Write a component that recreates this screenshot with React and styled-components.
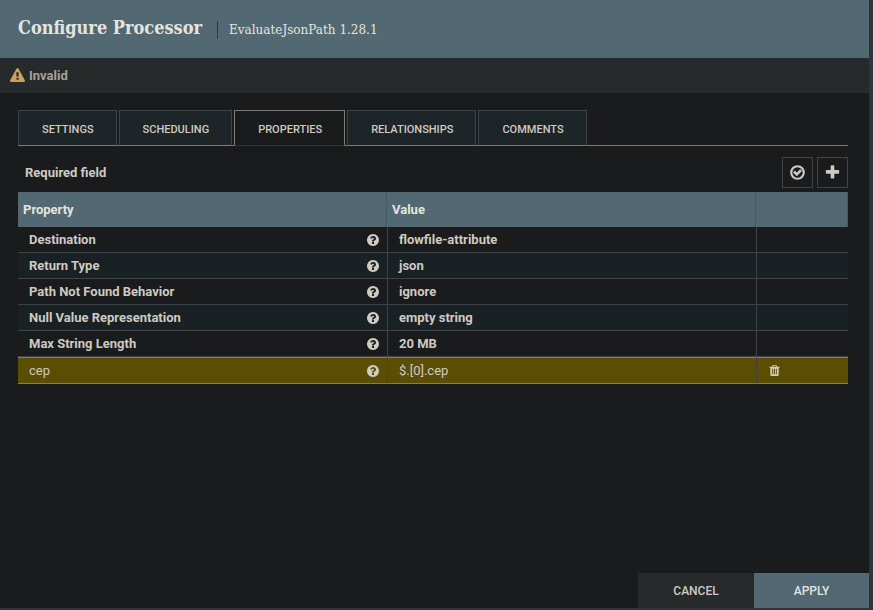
import React, { useState } from "react";
import styled, { createGlobalStyle } from "styled-components";

const GlobalStyle = createGlobalStyle`
  * { box-sizing: border-box; }
  body {
    margin: 0;
    background: #29383d;
    color: #cfcac2;
    font: 13px/18px Roboto, "Liberation Sans", sans-serif;
  }
  button { font: inherit; color: inherit; cursor: pointer; }
`;

const Page = styled.div`
  display: flex;
  min-height: 100vh;
  padding: 0 4px 2px 0;
`;

const Dialog = styled.main`
  display: flex;
  flex: 1;
  flex-direction: column;
  min-width: 0;
  background: #1a1b1d;
`;

const Header = styled.header`
  display: flex;
  align-items: center;
  height: 58px;
  padding: 0 18px 2px;
  background: #526872;
  color: #e6e3df;
`;

const Title = styled.h1`
  margin: 0;
  padding-right: 15px;
  font-family: "Roboto Slab", "DejaVu Serif Condensed", "DejaVu Serif", serif;
  font-size: 18px;
  line-height: 24px;
  font-weight: 700;
`;

const Subtitle = styled.div`
  margin-top: 4px;
  padding-left: 11px;
  border-left: 1px solid #2c3a40;
  font-family: "Roboto Slab", "DejaVu Serif", serif;
  font-size: 12px;
  line-height: 18px;
`;

const StatusBar = styled.div`
  display: flex;
  align-items: center;
  gap: 4px;
  height: 35px;
  padding: 0 10px;
  background: #262a2b;
  color: #a8a197;
  font-weight: 700;
`;

const Icon = styled.svg`
  display: block;
  flex: none;
  width: ${(p) => p.$size}px;
  height: ${(p) => p.$size}px;
  color: ${(p) => p.$color || "inherit"};
  fill: currentColor;
`;

const Content = styled.div`
  flex: 1;
  padding: 17px 21px 16px 18px;
`;

const TabList = styled.div`
  display: flex;
  gap: 2px;
  height: 36px;
  border-bottom: 1px solid #857b6d;
`;

const Tab = styled.button`
  height: 36px;
  padding: 4px 22px 0 23px;
  border: 1px solid ${(p) => (p.$active ? "#857b6d" : "#3d4346")};
  border-bottom-color: ${(p) => (p.$active ? "#303234" : "#857b6d")};
  background: ${(p) => (p.$active ? "#1a1b1d" : "#1e2528")};
  font-size: 11px;
  font-weight: 500;
`;

const Toolbar = styled.div`
  display: flex;
  align-items: center;
  gap: 4px;
  padding: 11px 0 4px 7px;
`;

const ToolbarLabel = styled.div`
  flex: 1;
  font-weight: 700;
`;

const SquareButton = styled.button`
  display: grid;
  place-items: center;
  width: 31px;
  height: 31px;
  padding: 0;
  border: 1px solid #3f4344;
  background: #1a1b1d;
`;

const Table = styled.table`
  width: 100%;
  table-layout: fixed;
  border-collapse: separate;
  border-spacing: 0;
`;

const ActionsCol = styled.col`
  width: 92px;
`;

const HeadCell = styled.th`
  height: 35px;
  padding: 0 5px;
  border-right: 1px solid #4c5a60;
  background: #526872;
  color: #e6e3df;
  text-align: left;
  font-weight: 700;
`;

const Row = styled.tr`
  height: ${(p) => (p.$custom ? 27 : 26)}px;
  background: ${(p) => (p.$custom ? "#5c4e00" : "transparent")};
  font-weight: ${(p) => (p.$custom ? 400 : 700)};
  &:nth-child(even):not(:last-child) { background: #1a2124; }
  & > td {
    border-bottom: 1px solid ${(p) => (p.$custom ? "#857b6d" : "#3d4346")};
    border-top: ${(p) => (p.$custom ? "1px solid #857b6d" : "0")};
  }
`;

const Cell = styled.td`
  padding: 0 7px 0 11px;
  & + & { border-left: 1px solid #3d4346; }
`;

const NameContent = styled.div`
  display: flex;
  align-items: center;
  justify-content: space-between;
`;

const IconButton = styled.button`
  display: block;
  padding: 0;
  border: 0;
  background: none;
`;

const Footer = styled.footer`
  display: flex;
  justify-content: flex-end;
`;

const FooterButton = styled.button`
  width: ${(p) => (p.$primary ? 115 : 116)}px;
  height: 35px;
  border: 0;
  background: ${(p) => (p.$primary ? "#526872" : "#262a2b")};
  color: ${(p) => (p.$primary ? "#e6e3df" : "#cfcac2")};
  font-size: 12px;
  font-weight: 500;
`;

const PATHS = {
  warning:
    "M1024 1375v-190q0-14-9.5-23.5t-22.5-9.5h-192q-13 0-22.5 9.5t-9.5 23.5v190q0 14 9.5 23.5t22.5 9.5h192q13 0 22.5-9.5t9.5-23.5zm-2-374l18-459q0-12-10-19-13-11-24-11h-220q-11 0-24 11-10 7-10 21l17 457q0 10 10 16.5t24 6.5h185q14 0 23.5-6.5t10.5-16.5zm-14-934l768 1408q35 63-2 126-17 29-46.5 46t-63.5 17h-1536q-34 0-63.5-17t-46.5-46q-37-63-2-126l768-1408q17-31 47-49t65-18 65 18 47 49z",
  question:
    "M1024 1376v-192q0-14-9-23t-23-9h-192q-14 0-23 9t-9 23v192q0 14 9 23t23 9h192q14 0 23-9t9-23zm256-672q0-88-55.5-163t-138.5-116-170-41q-243 0-371 213-15 24 8 42l132 100q7 6 19 6 16 0 25-12 53-68 86-92 34-24 86-24 48 0 85.5 26t37.5 59q0 38-20 61t-68 45q-63 28-115.5 86.5t-52.5 125.5v36q0 14 9 23t23 9h192q14 0 23-9t9-23q0-19 21.5-49.5t54.5-49.5q32-18 49-28.5t46-35 44.5-48 28-60.5 12.5-81zm384 192q0 209-103 385.5t-279.5 279.5-385.5 103-385.5-103-279.5-279.5-103-385.5 103-385.5 279.5-279.5 385.5-103 385.5 103 279.5 279.5 103 385.5z",
  plus:
    "M1600 736v192q0 40-28 68t-68 28h-416v416q0 40-28 68t-68 28h-192q-40 0-68-28t-28-68v-416h-416q-40 0-68-28t-28-68v-192q0-40 28-68t68-28h416v-416q0-40 28-68t68-28h192q40 0 68 28t28 68v416h416q40 0 68 28t28 68z",
  trash:
    "M704 1376v-704q0-14-9-23t-23-9h-64q-14 0-23 9t-9 23v704q0 14 9 23t23 9h64q14 0 23-9t9-23zm256 0v-704q0-14-9-23t-23-9h-64q-14 0-23 9t-9 23v704q0 14 9 23t23 9h64q14 0 23-9t9-23zm256 0v-704q0-14-9-23t-23-9h-64q-14 0-23 9t-9 23v704q0 14 9 23t23 9h64q14 0 23-9t9-23zm-544-992h448l-48-117q-7-9-17-11h-317q-10 2-17 11zm928 32v64q0 14-9 23t-23 9h-96v948q0 83-47 143.5t-113 60.5h-832q-66 0-113-58.5t-47-141.5v-952h-96q-14 0-23-9t-9-23v-64q0-14 9-23t23-9h309l70-167q15-37 54-63t79-26h320q40 0 79 26t54 63l70 167h309q14 0 23 9t9 23z",
};

function Glyph({ name, size, color }) {
  return (
    <Icon viewBox="0 0 1792 1792" $size={size} $color={color} aria-hidden="true">
      <path d={PATHS[name]} />
    </Icon>
  );
}

function CheckCircle({ size }) {
  return (
    <Icon viewBox="0 0 1792 1792" $size={size} aria-hidden="true">
      <circle cx="896" cy="896" r="660" fill="none" stroke="currentColor" strokeWidth="230" />
      <path
        d="M520 790L820 1090L1272 638"
        fill="none"
        stroke="currentColor"
        strokeWidth="270"
        strokeLinejoin="miter"
      />
    </Icon>
  );
}

const TABS = ["SETTINGS", "SCHEDULING", "PROPERTIES", "RELATIONSHIPS", "COMMENTS"];

const PROPERTIES = [
  { name: "Destination", value: "flowfile-attribute" },
  { name: "Return Type", value: "json" },
  { name: "Path Not Found Behavior", value: "ignore" },
  { name: "Null Value Representation", value: "empty string" },
  { name: "Max String Length", value: "20 MB" },
  { name: "cep", value: "$.[0].cep", custom: true },
];

export default function App() {
  const [active, setActive] = useState("PROPERTIES");
  return (
    <>
      <GlobalStyle />
      <Page>
        <Dialog>
          <Header>
            <Title>Configure Processor</Title>
            <Subtitle>EvaluateJsonPath 1.28.1</Subtitle>
          </Header>
          <StatusBar>
            <Glyph name="warning" size={15} color="#cf9f5d" />
            Invalid
          </StatusBar>
          <Content>
            <TabList role="tablist">
              {TABS.map((tab) => (
                <Tab
                  key={tab}
                  type="button"
                  role="tab"
                  aria-selected={tab === active}
                  $active={tab === active}
                  onClick={() => setActive(tab)}
                >
                  {tab}
                </Tab>
              ))}
            </TabList>
            <Toolbar>
              <ToolbarLabel>Required field</ToolbarLabel>
              <SquareButton type="button" aria-label="Verify properties">
                <CheckCircle size={17} />
              </SquareButton>
              <SquareButton type="button" aria-label="Add property">
                <Glyph name="plus" size={17} />
              </SquareButton>
            </Toolbar>
            <Table>
              <colgroup>
                <col />
                <col />
                <ActionsCol />
              </colgroup>
              <thead>
                <tr>
                  <HeadCell scope="col">Property</HeadCell>
                  <HeadCell scope="col">Value</HeadCell>
                  <HeadCell scope="col" aria-label="Actions" />
                </tr>
              </thead>
              <tbody>
                {PROPERTIES.map(({ name, value, custom }) => (
                  <Row key={name} $custom={custom}>
                    <Cell>
                      <NameContent>
                        {name}
                        <IconButton type="button" aria-label={`About ${name}`}>
                          <Glyph name="question" size={14} />
                        </IconButton>
                      </NameContent>
                    </Cell>
                    <Cell>{value}</Cell>
                    <Cell>
                      {custom && (
                        <IconButton type="button" aria-label={`Delete ${name}`}>
                          <Glyph name="trash" size={13} />
                        </IconButton>
                      )}
                    </Cell>
                  </Row>
                ))}
              </tbody>
            </Table>
          </Content>
          <Footer>
            <FooterButton type="button">CANCEL</FooterButton>
            <FooterButton type="button" $primary>
              APPLY
            </FooterButton>
          </Footer>
        </Dialog>
      </Page>
    </>
  );
}
